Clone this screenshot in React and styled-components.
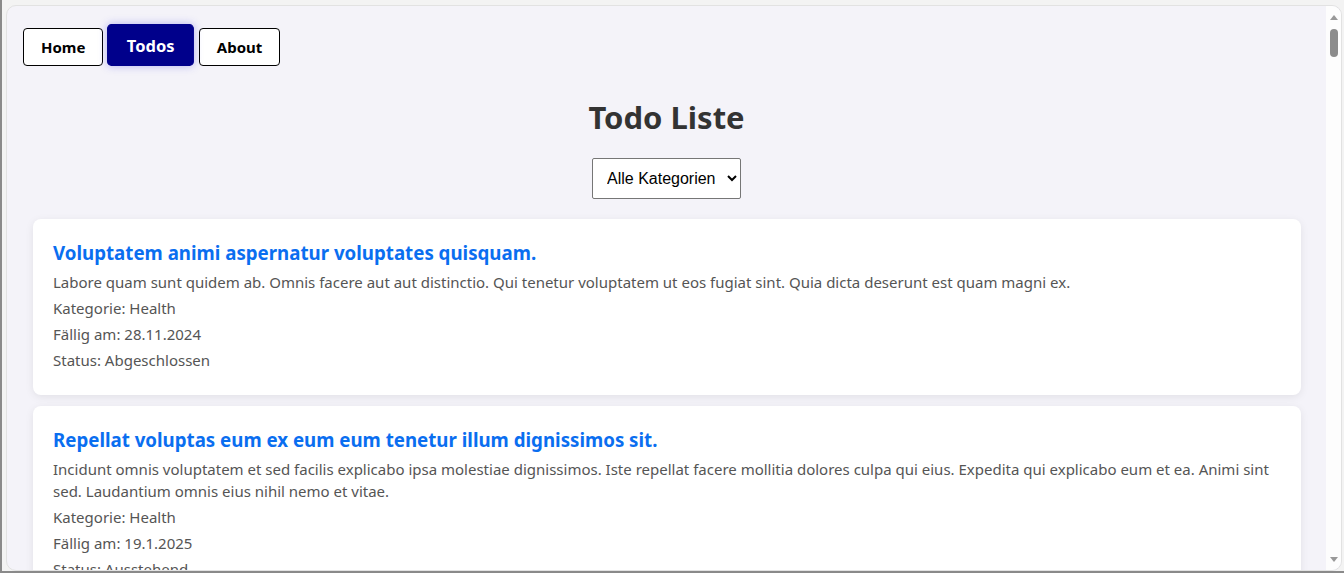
import React from 'react';
import styled, { createGlobalStyle } from 'styled-components';

const GlobalStyle = createGlobalStyle`
    html, body {
        margin: 0;
        padding: 0;
        background: #f3f3f3;
        overflow: hidden;
    }
`;

const Screen = styled.div`
    box-sizing: border-box;
    height: 573px;
    padding: 5px 2px 2px 4px;
    border-left: 2px solid #8a8a8a;
    border-bottom: 2px solid #8a8a8a;
    background: #f3f3f3;
`;

const Window = styled.div`
    display: flex;
    height: 100%;
    border: 1px solid #e2e2e2;
    border-radius: 10px;
    overflow: hidden;
    background: #f4f3f9;
`;

const Page = styled.main`
    flex: 1;
    overflow: hidden;
    font-family: 'Noto Sans', 'Open Sans', sans-serif;
`;

const Nav = styled.nav`
    display: flex;
    align-items: center;
    gap: 8px;
    padding: 22px 16px 0;
`;

const NavButton = styled.button`
    height: 38px;
    padding: 0 17px;
    font-family: 'Noto Sans', sans-serif;
    font-size: 15px;
    font-weight: 700;
    color: ${({ active }) => (active ? '#fff' : '#000')};
    background: ${({ active }) => (active ? '#00008b' : '#fff')};
    border: 1px solid ${({ active }) => (active ? '#00008b' : '#000')};
    border-radius: 4px;
    transform: ${({ active }) => (active ? 'translateY(-2px) scale(1.1)' : 'none')};
    box-shadow: ${({ active }) => (active ? '0 0 8px rgba(60, 60, 230, 0.35)' : 'none')};
`;

const Title = styled.h2`
    margin: 30px 0 20px;
    text-align: center;
    font-size: 31px;
    font-weight: 700;
    color: #333;
`;

const FilterRow = styled.div`
    display: flex;
    justify-content: center;
    margin-bottom: 20px;
`;

const Select = styled.select`
    height: 41px;
    padding: 0 8px 0 10px;
    font-family: 'Liberation Sans', Arial, sans-serif;
    font-size: 16px;
    color: #000;
    background: #fff;
    border: 1px solid #767676;
    border-radius: 2px;
`;

const List = styled.div`
    display: flex;
    flex-direction: column;
    gap: 11px;
    padding: 0 25px 0 26px;
`;

const Card = styled.article`
    padding: 20px 20px 20px;
    background: #fff;
    border-radius: 8px;
    box-shadow: 0 2px 8px rgba(0, 0, 0, 0.08);
`;

const CardTitle = styled.h3`
    margin: 0 0 5px;
    font-size: 18.7px;
    line-height: 27px;
    font-weight: 700;
    color: #0a6ef0;
`;

const Line = styled.p`
    margin: 0 0 4px;
    font-size: 15px;
    line-height: 22px;
    color: #555;
`;

const ScrollBar = styled.div`
    display: flex;
    flex-direction: column;
    align-items: center;
    width: 15px;
    padding: 9px 0 8px;
    background: #fdfdfd;
`;

const Arrow = styled.div`
    width: 0;
    height: 0;
    border-left: 4px solid transparent;
    border-right: 4px solid transparent;
    ${({ down }) => (down ? 'border-top: 5px solid #999;' : 'border-bottom: 5px solid #999;')}
    ${({ down }) => (down ? 'margin-top: auto;' : '')}
`;

const Thumb = styled.div`
    width: 8px;
    height: 28px;
    margin-top: 9px;
    border-radius: 4px;
    background: #8c8c8c;
`;

const todos = [
    {
        title: 'Voluptatem animi aspernatur voluptates quisquam.',
        text: 'Labore quam sunt quidem ab. Omnis facere aut aut distinctio. Qui tenetur voluptatem ut eos fugiat sint. Quia dicta deserunt est quam magni ex.',
        category: 'Health',
        due: '28.11.2024',
        status: 'Abgeschlossen',
    },
    {
        title: 'Repellat voluptas eum ex eum eum tenetur illum dignissimos sit.',
        text: 'Incidunt omnis voluptatem et sed facilis explicabo ipsa molestiae dignissimos. Iste repellat facere mollitia dolores culpa qui eius. Expedita qui explicabo eum et ea. Animi sint sed. Laudantium omnis eius nihil nemo et vitae.',
        category: 'Health',
        due: '19.1.2025',
        status: 'Ausstehend',
    },
];

export default function App() {
    return (
        <Screen>
            <GlobalStyle />
            <Window>
                <Page>
                    <Nav>
                        <NavButton>Home</NavButton>
                        <NavButton active>Todos</NavButton>
                        <NavButton>About</NavButton>
                    </Nav>
                    <Title>Todo Liste</Title>
                    <FilterRow>
                        <Select defaultValue="all">
                            <option value="all">Alle Kategorien</option>
                            <option value="health">Health</option>
                        </Select>
                    </FilterRow>
                    <List>
                        {todos.map((todo) => (
                            <Card key={todo.title}>
                                <CardTitle>{todo.title}</CardTitle>
                                <Line>{todo.text}</Line>
                                <Line>Kategorie: {todo.category}</Line>
                                <Line>Fällig am: {todo.due}</Line>
                                <Line>Status: {todo.status}</Line>
                            </Card>
                        ))}
                    </List>
                </Page>
                <ScrollBar>
                    <Arrow />
                    <Thumb />
                    <Arrow down />
                </ScrollBar>
            </Window>
        </Screen>
    );
}
